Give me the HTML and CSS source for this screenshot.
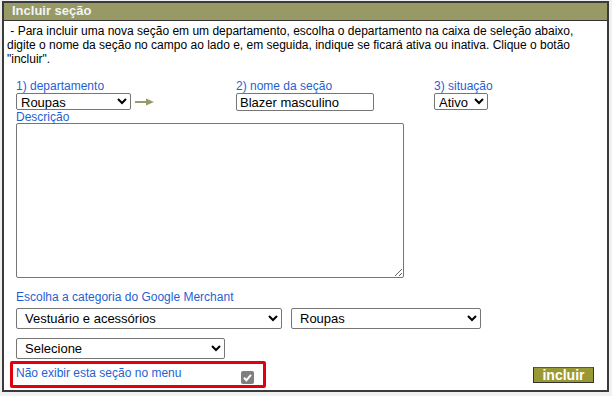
FILE: index.html
```html
<!DOCTYPE html>
<html lang="pt-BR">
<head>
    <meta charset="UTF-8">
    <title>Incluir seção</title>
    <link rel="stylesheet" href="styles.css">
</head>
<body>

    <div class="panel">
        <div class="panel-title">Incluir seção</div>

        <div class="panel-body">
            <p class="intro">&nbsp;- Para incluir uma nova seção em um departamento, escolha o departamento na caixa de seleção abaixo, digite o nome da seção no campo ao lado e, em seguida, indique se ficará ativa ou inativa. Clique o botão "incluir".</p>

            <div class="form-area">
                <div class="main-row">
                    <div class="field">
                        <label for="depto">1) departamento</label>
                        <div class="inline">
                            <select id="depto" class="sel-depto">
                                <option>Roupas</option>
                            </select>
                            <svg class="arrow" width="20" height="8" viewBox="0 0 20 8">
                                <path d="M0 4 H12" stroke="#99996a" stroke-width="2"/>
                                <path d="M11 0.5 L19 4 L11 7.5 Z" fill="#99996a"/>
                            </svg>
                        </div>
                    </div>
                    <div class="field">
                        <label for="nome">2) nome da seção</label>
                        <input type="text" id="nome" class="txt-nome" value="Blazer masculino">
                    </div>
                    <div class="field">
                        <label for="situacao">3) situação</label>
                        <select id="situacao" class="sel-situacao">
                            <option>Ativo</option>
                            <option>Inativo</option>
                        </select>
                    </div>
                </div>

                <label for="descricao" class="lbl-desc">Descrição</label>
                <textarea id="descricao" class="desc"></textarea>

                <div class="lbl-merchant">Escolha a categoria do Google Merchant</div>
                <div class="merchant-row">
                    <select class="sel-cat1">
                        <option>Vestuário e acessórios</option>
                    </select>
                    <select class="sel-cat2">
                        <option>Roupas</option>
                    </select>
                </div>
                <select class="sel-cat3">
                    <option>Selecione</option>
                </select>
            </div>

            <div class="bottom-row">
                <div class="hide-menu">
                    <label>Não exibir esta seção no menu</label>
                    <!-- checkbox marcado e desabilitado -->
                    <span class="check-disabled">
                        <svg width="13" height="13" viewBox="0 0 13 13">
                            <path d="M3 6.8 L5.4 9.2 L10 3.8" fill="none" stroke="#fff" stroke-width="2"/>
                        </svg>
                    </span>
                </div>
                <button type="button" class="btn-incluir">incluir</button>
            </div>
        </div>
    </div>

</body>
</html>
```

FILE: styles.css
```css
body {
    margin: 0;
    padding: 1px 2px 0 2px;
    background-color: #f0f0f0;
    font-family: "Liberation Sans", Arial, sans-serif;
    font-size: 12px;
}

.panel {
    width: 603px;
    height: 387px;
    border: 2px solid #3a3a3a;
    background-color: #fff;
    display: flex;
    flex-direction: column;
}

.panel-title {
    height: 17px;
    line-height: 16px;
    background-color: #999966;
    border-bottom: 1px solid #333;
    color: #eef6f6;
    font-weight: bold;
    font-size: 13px;
    padding-left: 8px;
}

.panel-body {
    flex: 1;
    display: flex;
    flex-direction: column;
    padding: 3px 12px 0 3px;
}

.intro {
    margin: 0;
    line-height: 14px;
    color: #000;
}

.form-area {
    padding-left: 9px;
    margin-top: 14px;
}

.form-area label,
.lbl-merchant,
.hide-menu label {
    color: #1f5fd2;
    display: block;
}

.main-row {
    display: grid;
    grid-template-columns: 220px 198px auto;
}

.field label {
    line-height: 13px;
}

.inline {
    display: flex;
    align-items: center;
    gap: 4px;
}

select,
input[type="text"],
textarea {
    font-family: "Liberation Sans", Arial, sans-serif;
    font-size: 13px;
    color: #000;
    border: 1px solid #767676;
    border-radius: 2px;
    background-color: #fff;
    box-sizing: border-box;
    margin: 0;
}

.sel-depto {
    width: 115px;
    height: 17px;
    padding: 0;
}

.arrow {
    margin-top: 1px;
}

.txt-nome {
    display: block;
    width: 138px;
    height: 18px;
    padding: 0 3px;
    margin-top: -1px;
}

.sel-situacao {
    width: 54px;
    height: 17px;
    padding: 0;
}

.lbl-desc {
    line-height: 12px;
}

.desc {
    display: block;
    width: 388px;
    height: 155px;
    resize: both;
}

.lbl-merchant {
    margin-top: 12px;
    line-height: 14px;
}

.merchant-row {
    display: flex;
    gap: 9px;
    margin-top: 4px;
}

.sel-cat1,
.sel-cat2,
.sel-cat3 {
    height: 21px;
    padding: 0 4px;
}

.sel-cat1 {
    width: 266px;
}

.sel-cat2 {
    width: 190px;
}

.sel-cat3 {
    display: block;
    width: 209px;
    margin-top: 9px;
}

.bottom-row {
    display: flex;
    justify-content: space-between;
    align-items: flex-end;
    margin-top: 2px;
}

.hide-menu {
    box-sizing: border-box;
    width: 256px;
    height: 27px;
    margin-left: 3px;
    border: 3px solid #e0000e;
    border-radius: 2px;
    display: flex;
    justify-content: space-between;
    align-items: flex-start;
    padding: 0 9px 0 3px;
}

.hide-menu label {
    margin-top: 2px;
}

.check-disabled {
    display: block;
    width: 13px;
    height: 13px;
    margin-top: 7px;
    background-color: #7f7f7f;
    border-radius: 2px;
}

.check-disabled svg {
    display: block;
}

.btn-incluir {
    width: 61px;
    height: 16px;
    margin: 0 1px 5px 0;
    padding: 0;
    background-color: #999933;
    border: 1px solid #333;
    border-top-color: #555;
    color: #fff;
    font-family: "Liberation Sans", Arial, sans-serif;
    font-weight: bold;
    font-size: 14px;
    line-height: 13px;
}
```
